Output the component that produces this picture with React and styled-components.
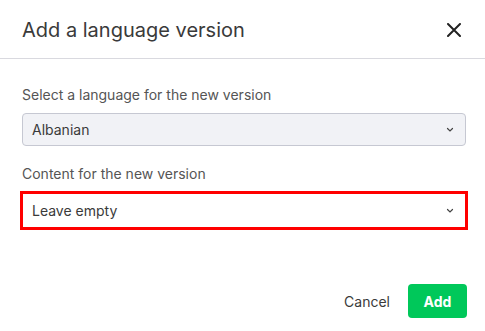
import React from 'react';
import styled, { createGlobalStyle } from 'styled-components';

const GlobalStyle = createGlobalStyle`
  html, body {
    margin: 0;
    padding: 0;
    background: #ffffff;
    font-family: Inter, "Noto Sans", sans-serif;
  }
`;

const App = () => {
  return (
    <>
      <GlobalStyle />
      <Dialog>
        <Header>
          <Title>Add a language version</Title>
          <CloseButton aria-label="Close">
            <svg width="14" height="14" viewBox="0 0 14 14">
              <path d="M1 1L13 13M13 1L1 13" stroke="#222" strokeWidth="2" strokeLinecap="round" />
            </svg>
          </CloseButton>
        </Header>
        <Body>
          <Field>
            <Label>Select a language for the new version</Label>
            <Select>
              <span>Albanian</span>
              <Chevron />
            </Select>
          </Field>
          <Field>
            <Label>Content for the new version</Label>
            <Highlight>
              <Select $plain>
                <span>Leave empty</span>
                <Chevron />
              </Select>
            </Highlight>
          </Field>
        </Body>
        <Footer>
          <TextButton>Cancel</TextButton>
          <PrimaryButton>Add</PrimaryButton>
        </Footer>
      </Dialog>
    </>
  );
};

const Chevron = () => (
  <ChevronIcon width="8" height="6" viewBox="0 0 8 6">
    <path d="M1.5 1.5L4 4L6.5 1.5" stroke="#444" strokeWidth="1.2" fill="none" strokeLinecap="round" />
  </ChevronIcon>
);

const Dialog = styled.div`
  width: 485px;
  height: 331px;
  display: flex;
  flex-direction: column;
  background: #fff;
`;

const Header = styled.div`
  height: 59px;
  box-sizing: border-box;
  display: flex;
  align-items: center;
  justify-content: space-between;
  padding: 1px 24px 0 22px;
  border-bottom: 1px solid #d9d9df;
`;

const Title = styled.h2`
  margin: 0;
  font-size: 20px;
  font-weight: 400;
  color: #3a3a3a;
`;

const CloseButton = styled.button`
  border: 0;
  background: none;
  padding: 0;
  display: flex;
  cursor: pointer;
`;

const Body = styled.div`
  padding: 27px 19px 0 22px;
  display: flex;
  flex-direction: column;
  gap: 19px;
`;

const Field = styled.div`
  display: flex;
  flex-direction: column;
`;

const Label = styled.div`
  font-size: 14px;
  color: #555;
  margin-bottom: 9px;
  line-height: 18px;
`;

const Highlight = styled.div`
  margin: -1px -2px 0;
  border: 3px solid #ff0000;
`;

const Select = styled.div`
  height: 33px;
  box-sizing: border-box;
  display: flex;
  align-items: center;
  justify-content: space-between;
  padding: 0 11px 0 9px;
  font-size: 14px;
  color: #3a3a3a;
  background: ${(p) => (p.$plain ? '#fff' : '#f1f2f6')};
  border: ${(p) => (p.$plain ? '0' : '1px solid #c6c8d2')};
  border-radius: ${(p) => (p.$plain ? '0' : '4px')};
`;

const ChevronIcon = styled.svg`
  display: block;
`;

const Footer = styled.div`
  margin-top: auto;
  display: flex;
  align-items: center;
  justify-content: flex-end;
  gap: 18px;
  padding: 0 18px 13px 0;
`;

const TextButton = styled.button`
  border: 0;
  background: none;
  font-family: inherit;
  font-size: 14px;
  color: #3a3a3a;
  padding: 0;
`;

const PrimaryButton = styled.button`
  border: 0;
  background: #00c85a;
  color: #fff;
  font-family: inherit;
  font-weight: 700;
  font-size: 14px;
  width: 59px;
  height: 34px;
  border-radius: 4px;
`;

export default App;
